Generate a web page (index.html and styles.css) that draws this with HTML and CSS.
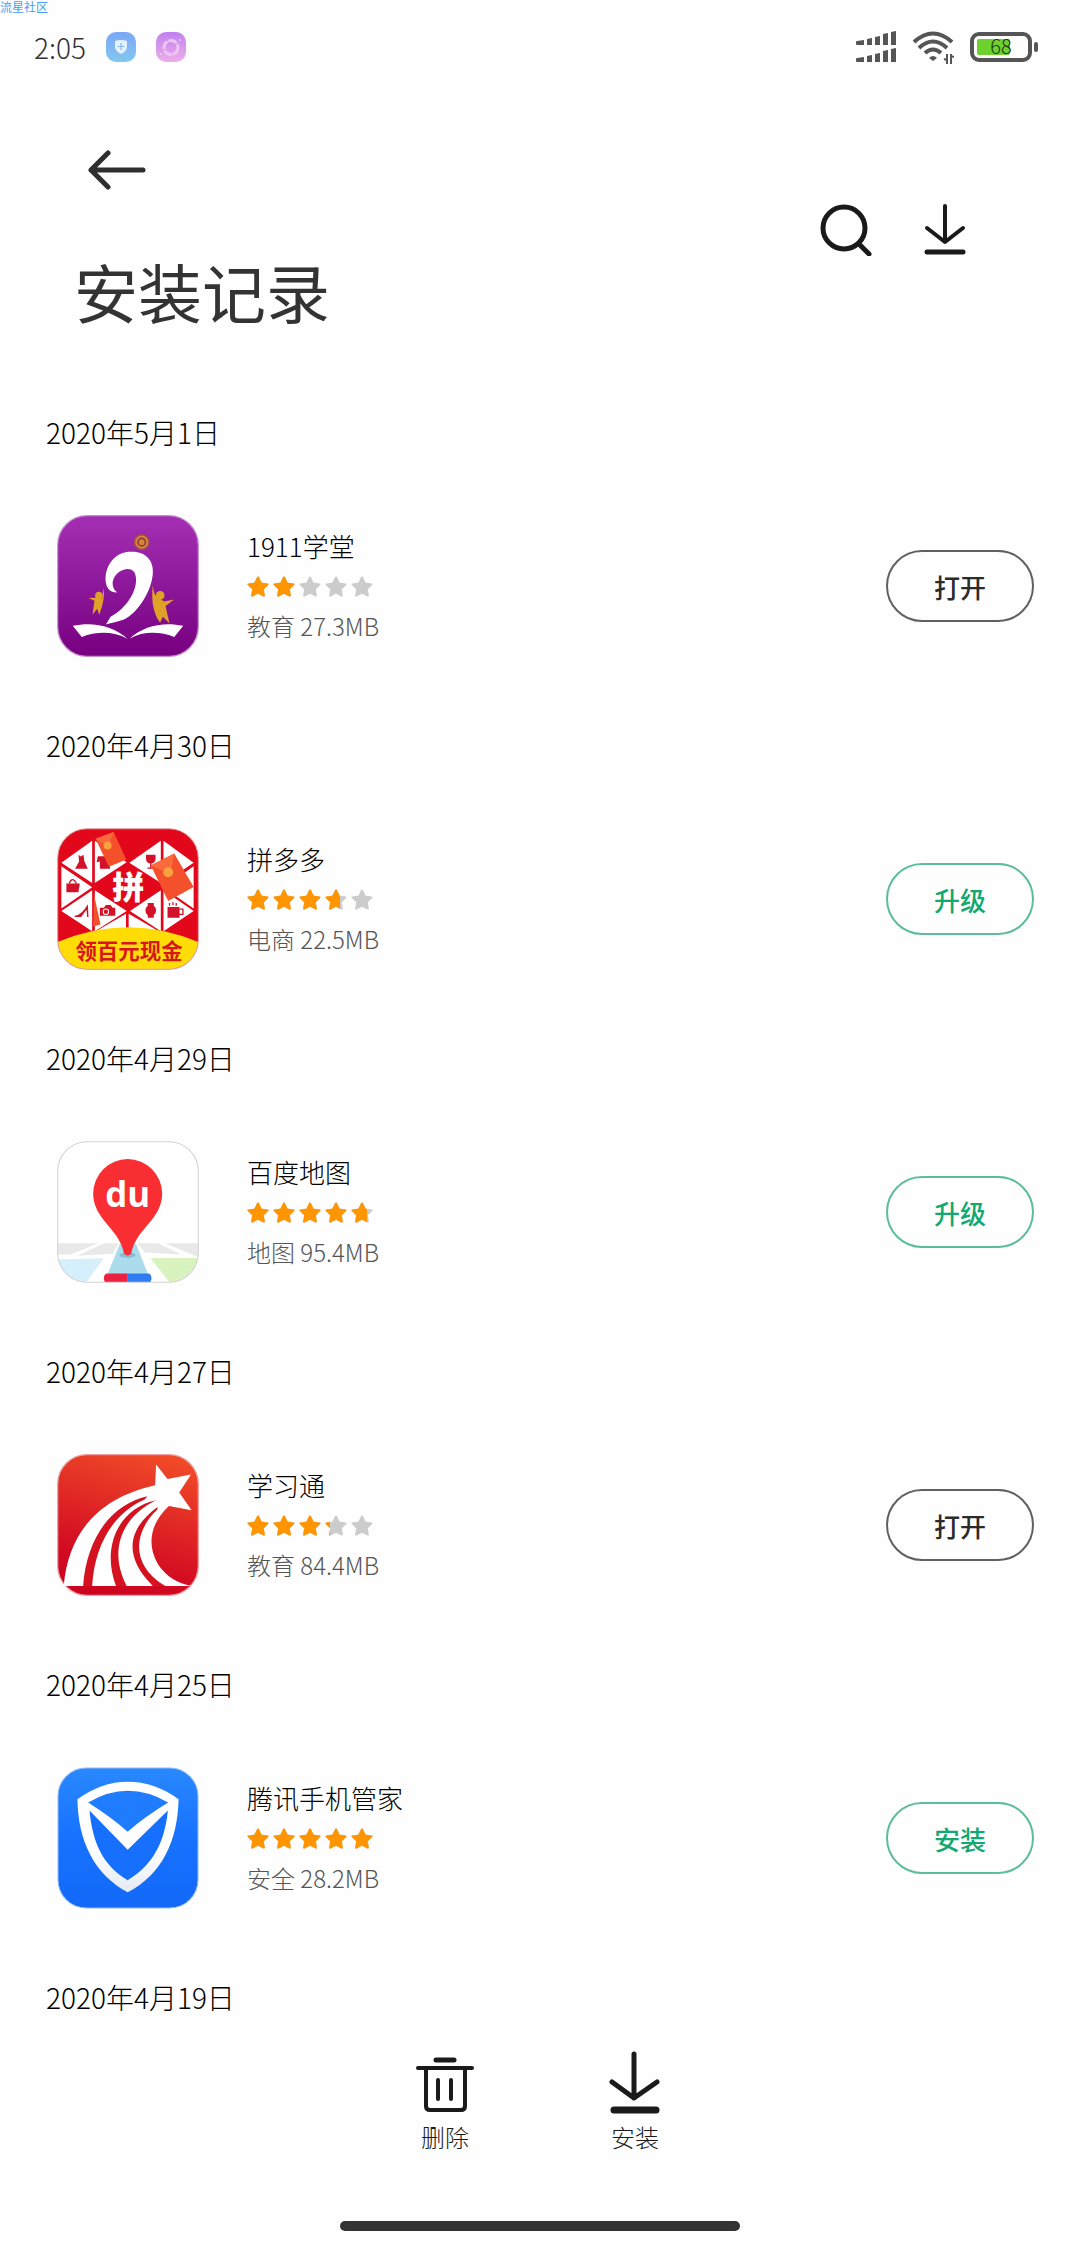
FILE: index.html
```html
<!DOCTYPE html>
<html lang="zh-CN">
<head>
  <meta charset="UTF-8">
  <meta name="viewport" content="width=device-width, initial-scale=1.0">
  <title>安装记录</title>
  <link rel="stylesheet" href="styles.css">
</head>
<body>
<!-- Shared symbols -->
<svg class="symbols" aria-hidden="true">
  <symbol id="star" viewBox="0 0 22 22">
    <path d="M11 1.5l2.9 6 6.6.9-4.8 4.6 1.2 6.6-5.9-3.1-5.9 3.1 1.2-6.6L1.5 8.4l6.6-.9z" fill="currentColor" stroke="currentColor" stroke-width="2" stroke-linejoin="round"/>
  </symbol>
  <symbol id="stars" viewBox="0 0 126 22">
    <use href="#star" x="0" width="22" height="22"/>
    <use href="#star" x="26" width="22" height="22"/>
    <use href="#star" x="52" width="22" height="22"/>
    <use href="#star" x="78" width="22" height="22"/>
    <use href="#star" x="104" width="22" height="22"/>
  </symbol>
</svg>

<div class="page">
  <span class="watermark">流星社区</span>

  <!-- Status bar -->
  <div class="status-bar">
    <span class="time">2:05</span>
    <svg class="status-app" viewBox="0 0 30 30">
      <defs><linearGradient id="sa1" x2="0" y2="1"><stop stop-color="#7ba6f7"/><stop offset="1" stop-color="#83c8f0"/></linearGradient></defs>
      <rect width="30" height="30" rx="10" fill="url(#sa1)"/>
      <path d="M9 9q6-2 12 0v6q0 4-6 7-6-3-6-7z" fill="#e6f1fd"/>
      <path d="M15 11v7M11.500 14.500h7" stroke="#84b6f4" stroke-width="1.200"/>
    </svg>
    <svg class="status-app" viewBox="0 0 30 30">
      <defs><linearGradient id="sa2" x2="0" y2="1"><stop stop-color="#c080f0"/><stop offset="1" stop-color="#eeaee8"/></linearGradient></defs>
      <rect width="30" height="30" rx="10" fill="url(#sa2)"/>
      <circle cx="15" cy="15.500" r="7" fill="none" stroke="#ecc6f6" stroke-width="3" stroke-dasharray="9 1"/>
      <circle cx="24" cy="8" r="1" fill="#ecc6f6"/><circle cx="5" cy="22" r="1" fill="#ecc6f6"/>
    </svg>
    <div class="status-right">
      <svg width="40" height="32" viewBox="0 0 40 32" fill="#555">
        <path d="M0 11q0-1 1-1l7-1v5H1q-1 0-1-1zM11 8l5-1v7h-5zM19 6l5-1v9h-5zM27 3l5-1v12h-5zM35 1l5-1v14h-5z"/>
        <path d="M0 28q0-1 1-1l7-1v5H1q-1 0-1-1zM11 25l5-1v7h-5zM19 23l5-1v9h-5zM27 20l5-1v12h-5zM35 18l5-1v14h-5z"/>
      </svg>
      <svg width="42" height="33" viewBox="0 0 42 33" fill="none" stroke="#555" stroke-width="4">
        <path d="M2 11Q21-6 40 11M7 17q14-13 28 0M13 22q8-7 16 0"/>
        <path d="M17 27q4-4 8 0l-4 3z" fill="#555" stroke="none"/>
        <path d="M35 23v10M32 28l3 1M39 23v10M39 25l3 1" stroke-width="2"/>
      </svg>
      <svg width="68" height="30" viewBox="0 0 68 30">
        <rect x="2" y="2" width="58" height="26" rx="7" fill="none" stroke="#555" stroke-width="4"/>
        <rect x="7" y="7" width="33" height="16" rx="2" fill="#6fd12f"/>
        <rect x="64" y="10" width="4" height="10" rx="2" fill="#555"/>
        <text class="battery-text" x="31" y="22" text-anchor="middle">68</text>
      </svg>
    </div>
  </div>

  <!-- Header -->
  <header class="header">
    <div class="header-left">
      <button class="icon-button back" aria-label="返回">
        <svg width="58" height="40" viewBox="0 0 58 40" fill="none" stroke="#2e2e2e" stroke-width="5" stroke-linecap="round" stroke-linejoin="round">
          <path d="M20 3L3 20l17 17M3 20h52"/>
        </svg>
      </button>
      <h1 class="title">安装记录</h1>
    </div>
    <div class="header-actions">
      <button class="icon-button" aria-label="搜索">
        <svg width="52" height="52" viewBox="0 0 52 52" fill="none" stroke="#1a1a1a" stroke-width="5" stroke-linecap="round">
          <circle cx="24" cy="24" r="21"/><path d="M39 40l10 10"/>
        </svg>
      </button>
      <button class="icon-button" aria-label="下载">
        <svg width="42" height="52" viewBox="0 0 42 52" fill="none" stroke="#1a1a1a" stroke-width="4" stroke-linecap="round" stroke-linejoin="round">
          <path d="M21 2v36M3 24l18 14 18-14"/><path d="M3 48h36" stroke-width="5"/>
        </svg>
      </button>
    </div>
  </header>

  <!-- Install records -->
  <main class="record-list">
    <section class="record">
      <h2 class="date">2020年5月1日</h2>
      <div class="app">
        <svg class="app-icon" viewBox="0 0 424 424">
          <defs><linearGradient id="g1" x2="0" y2="1"><stop stop-color="#a42fb4"/><stop offset="1" stop-color="#760080"/></linearGradient></defs>
          <rect x="2" y="2" width="420" height="420" rx="88" fill="url(#g1)" stroke="#c58fcc" stroke-width="4"/>
          <circle cx="253" cy="81" r="22" fill="#d8843a" stroke="#a04a50" stroke-width="5"/>
          <circle cx="253" cy="81" r="11" fill="none" stroke="#8f3a40" stroke-width="5"/>
          <path d="M180 231C156 234 143 212 145 186C149 140 180 110 220 110C268 108 290 140 286 176C282 226 244 290 200 312C180 320 164 320 146 327L160 304C210 276 238 226 236 190C235 170 226 160 208 161C184 164 166 184 166 206C167 218 172 226 180 231z" fill="#fff"/>
          <path d="M47 331C108 318 168 331 211 370C168 346 118 348 74 364zM377 331C318 318 258 331 217 369C258 346 308 348 350 364z" fill="#fff"/>
          <g fill="#e0a128">
            <circle cx="125" cy="240" r="11"/>
            <path d="M140 218q4 34-14 80l-6-18-14 18 6-42-18-8 30-2 10 4zM286 208q2 28 12 36l22 14 30-6-26 20 12 52-20-20-8 18q-30-40-22-114z"/>
            <circle cx="308" cy="240" r="13"/>
          </g>
        </svg>
        <div class="app-info">
          <h3 class="app-name">1911学堂</h3>
          <div class="rating" role="img" aria-label="2 星">
            <svg class="stars"><use href="#stars"/></svg>
            <div class="stars-on" style="width: 38%"><svg class="stars"><use href="#stars"/></svg></div>
          </div>
          <p class="app-meta">教育 27.3MB</p>
        </div>
        <button class="action">打开</button>
      </div>
    </section>

    <section class="record">
      <h2 class="date">2020年4月30日</h2>
      <div class="app">
        <svg class="app-icon" viewBox="0 0 424 424">
          <defs><clipPath id="round"><rect x="2" y="2" width="420" height="420" rx="88"/></clipPath></defs>
          <g clip-path="url(#round)">
            <rect width="424" height="424" fill="#e3071c"/>
            <path d="M105 38v126L13 104zM113 38v126l95-62zM13 114v126l92-63zM105 186v122L13 248zM113 186v122l95-60zM310 38v126l-94-60zM318 38v126l90-60zM408 114v126l-90-62zM310 186v122l-92-60zM318 186v122l90-60zM206 256v52h-90zM214 256v52h90z" fill="#fff"/>
            <!-- goods -->
            <g fill="#d3122a">
              <path d="M64 80l7 5 8-5 3 20 10 22H54l12-22zM122 84h36v38h-30v-22l-10 2z"/>
              <path d="M28 166h40l-4 26H28z"/><path d="M36 166q10-24 22 0" fill="none" stroke="#d3122a" stroke-width="4"/>
              <path d="M54 262q20-2 38-34l2 38h-4l-2-22-16 22H52zM128 238h12l6-8h14l6 8h8v24h-46z"/>
              <path d="M266 80h28q4 24-12 26v12h8v4h-20v-4h8v-12q-16-2-12-26z"/>
              <circle cx="280" cy="246" r="16"/><path d="M271 224h18v44h-18zM330 236h36v32h-36zM334 224h4v8h-4zM344 222h4v8h-4zM354 224h4v8h-4z"/>
              <path d="M366 242h10v16h-12" fill="none" stroke="#d3122a" stroke-width="4"/>
            </g>
            <circle cx="146" cy="250" r="8" fill="none" stroke="#fff" stroke-width="3"/>
            <text class="pdd-mark" x="213" y="213" text-anchor="middle">拼</text>
            <!-- red envelopes -->
            <path d="M115 32l54-20 38 82-52 22zM280 112l70-36 58 100-76 42zM110 196l20 92-22 6z" fill="#f4502c"/>
            <path d="M115 32l38 22 16-42zM280 112l58 26 12-62z" fill="#fa6a3c"/>
            <circle cx="151" cy="52" r="12" fill="#f7a23c"/><circle cx="332" cy="132" r="15" fill="#f7a23c"/>
            <path d="M0 341Q212 251 424 341V424H0z" fill="#ffdc05"/>
            <text class="pdd-banner" x="215" y="391" text-anchor="middle">领百元现金</text>
          </g>
          <rect x="2" y="2" width="420" height="420" rx="88" fill="none" stroke="#dfa0a0" stroke-width="3"/>
        </svg>
        <div class="app-info">
          <h3 class="app-name">拼多多</h3>
          <div class="rating" role="img" aria-label="3.7 星">
            <svg class="stars"><use href="#stars"/></svg>
            <div class="stars-on" style="width: 74%"><svg class="stars"><use href="#stars"/></svg></div>
          </div>
          <p class="app-meta">电商 22.5MB</p>
        </div>
        <button class="action green">升级</button>
      </div>
    </section>

    <section class="record">
      <h2 class="date">2020年4月29日</h2>
      <div class="app">
        <svg class="app-icon" viewBox="0 0 424 424">
          <g clip-path="url(#round)">
            <rect width="424" height="424" fill="#fff"/>
            <path d="M0 305h124l-84 34H0zM140 305h44l-18 32-106 6zM240 305h62l68 34-108-6zM322 305h102v42z" fill="#e9e9e9"/>
            <path d="M0 354l140-4-54 74H0z" fill="#d5f0fb"/>
            <path d="M188 307h48l46 117H140z" fill="#acdcec"/>
            <path d="M278 349h146v75h-86z" fill="#d9f3bf"/>
            <ellipse cx="211" cy="341" rx="24" ry="8" fill="#84bdd4"/>
            <path d="M108 157A103 103 0 0 1 314 157C314 235 235 262 222 336Q211 348 200 336C187 262 108 235 108 157z" fill="#f92e33"/>
            <text class="du" x="211" y="197" text-anchor="middle">du</text>
            <path d="M211 396h-60q-11 0-11 14t11 14h60z" fill="#ec2140"/>
            <path d="M211 396h60q11 0 11 14t-11 14h-60z" fill="#2f7cf0"/>
          </g>
          <rect x="2" y="2" width="420" height="420" rx="88" fill="none" stroke="#d2d2d2" stroke-width="3"/>
        </svg>
        <div class="app-info">
          <h3 class="app-name">百度地图</h3>
          <div class="rating" role="img" aria-label="4.7 星">
            <svg class="stars"><use href="#stars"/></svg>
            <div class="stars-on" style="width: 95%"><svg class="stars"><use href="#stars"/></svg></div>
          </div>
          <p class="app-meta">地图 95.4MB</p>
        </div>
        <button class="action green">升级</button>
      </div>
    </section>

    <section class="record">
      <h2 class="date">2020年4月27日</h2>
      <div class="app">
        <svg class="app-icon" viewBox="0 0 424 424">
          <defs><linearGradient id="g4" x1=".7" y1="0" x2=".4" y2="1"><stop stop-color="#f04a28"/><stop offset=".8" stop-color="#d20a22"/><stop offset="1" stop-color="#cc0420"/></linearGradient></defs>
          <rect x="2" y="2" width="420" height="420" rx="88" fill="url(#g4)" stroke="#eaa0a0" stroke-width="4"/>
          <path d="M296 31l34 44 70-14-35 54 37 53-68-13C280 205 266 270 302 330C326 366 360 386 402 394H20C34 240 118 132 293 93z" fill="#fff"/>
          <g fill="#d5121f">
            <path d="M270 126C160 150 88 254 78 394h27C112 270 170 175 262 136z"/>
            <path d="M296 138C190 160 130 270 176 394h32C154 290 190 190 296 138z"/>
            <path d="M300 158C216 220 192 300 286 394h37C216 330 230 230 300 166z"/>
          </g>
        </svg>
        <div class="app-info">
          <h3 class="app-name">学习通</h3>
          <div class="rating" role="img" aria-label="3.2 星">
            <svg class="stars"><use href="#stars"/></svg>
            <div class="stars-on" style="width: 66%"><svg class="stars"><use href="#stars"/></svg></div>
          </div>
          <p class="app-meta">教育 84.4MB</p>
        </div>
        <button class="action">打开</button>
      </div>
    </section>

    <section class="record">
      <h2 class="date">2020年4月25日</h2>
      <div class="app">
        <svg class="app-icon" viewBox="0 0 424 424">
          <defs>
            <linearGradient id="g5" x2="0" y2="1"><stop stop-color="#2a88ff"/><stop offset=".5" stop-color="#1672ff"/><stop offset="1" stop-color="#1469f8"/></linearGradient>
            <linearGradient id="g5w" x2="0" y2="1"><stop offset=".6" stop-color="#fff"/><stop offset="1" stop-color="#e6ebf2"/></linearGradient>
          </defs>
          <rect x="3" y="3" width="418" height="418" rx="84" fill="url(#g5)" stroke="#8fbcf8" stroke-width="3"/>
          <path d="M61 96C108 62 158 44 211 44S318 62 363 96C360 218 316 318 211 374C108 318 63 218 61 96z" fill="url(#g5w)"/>
          <path d="M93 106Q211 36 332 106Q260 150 211 193Q162 150 93 106z" fill="#1f7cff"/>
          <path d="M97 130L211 247L331 130C322 224 286 294 211 338C136 294 106 224 97 130z" fill="#1770fd"/>
        </svg>
        <div class="app-info">
          <h3 class="app-name">腾讯手机管家</h3>
          <div class="rating" role="img" aria-label="5 星">
            <svg class="stars"><use href="#stars"/></svg>
            <div class="stars-on" style="width: 100%"><svg class="stars"><use href="#stars"/></svg></div>
          </div>
          <p class="app-meta">安全 28.2MB</p>
        </div>
        <button class="action green">安装</button>
      </div>
    </section>

    <section class="record">
      <h2 class="date">2020年4月19日</h2>
    </section>
  </main>

  <!-- Footer -->
  <footer class="footer">
    <div class="toolbar">
      <button class="tool">
        <svg width="58" height="64" viewBox="0 0 58 64" fill="none" stroke="#1a1a1a" stroke-width="4" stroke-linecap="round">
          <path d="M20 9h18" stroke-width="5"/>
          <path d="M2 17h54"/>
          <path d="M10 17v38q0 4 4 4h31q4 0 4-4V17M22 29v19M35 29v19"/>
        </svg>
        删除
      </button>
      <button class="tool">
        <svg width="58" height="64" viewBox="0 0 58 64" fill="none" stroke="#1a1a1a" stroke-width="5" stroke-linecap="round" stroke-linejoin="round">
          <path d="M28 3v44M6 31l22 16 23-16"/><path d="M8 59h42" stroke-width="7"/>
        </svg>
        安装
      </button>
    </div>
    <div class="home-bar"></div>
  </footer>
</div>
</body>
</html>
```
FILE: styles.css
```css
* {
  box-sizing: border-box;
}

body, html {
  margin: 0;
  padding: 0;
  background: #fefefe;
  color: #000;
  font-family: "Noto Sans CJK SC", sans-serif;
  font-weight: 300;
}

h1, h2, h3, p {
  margin: 0;
  font-weight: 300;
}

button {
  padding: 0;
  border: none;
  background: none;
  font-family: inherit;
  cursor: pointer;
}

svg {
  display: block;
  flex-shrink: 0;
}

.symbols {
  position: absolute;
  width: 0;
  height: 0;
}

.page {
  position: relative;
  display: flex;
  flex-direction: column;
  height: 100vh;
  overflow: hidden;
}

.watermark {
  position: absolute;
  top: 0;
  left: 0;
  font-size: 12px;
  line-height: 14px;
  font-weight: 400;
  color: #4a9df0;
}

/* Status bar */
.status-bar {
  display: flex;
  align-items: center;
  gap: 20px;
  height: 94px;
  padding: 0 42px 0 34px;
}

.time {
  font-size: 28px;
  line-height: 32px;
  color: #333;
}

.status-app {
  width: 30px;
  height: 30px;
}

.status-right {
  display: flex;
  align-items: center;
  gap: 16px;
  margin-left: auto;
}

.battery-text {
  font-size: 20px;
  fill: #1d3a0c;
}

/* Header */
.header {
  display: flex;
  align-items: center;
  justify-content: space-between;
  padding: 40px 98px 6px 74px;
}

.header-left {
  display: flex;
  flex-direction: column;
  align-items: flex-start;
  gap: 48px;
}

.icon-button {
  display: flex;
  align-items: center;
  justify-content: center;
  height: 72px;
  padding: 0 8px;
}

.back {
  padding: 0 14px;
}

.title {
  font-size: 64px;
  line-height: 72px;
  font-weight: 400;
  color: #333;
}

.header-actions {
  display: flex;
  align-items: center;
  gap: 36px;
  padding-right: 8px;
}

/* Install records */
.record-list {
  flex: 1;
  min-height: 0;
  padding: 80px 46px 0;
  overflow-y: auto;
  scrollbar-width: none;
}

.record {
  padding-bottom: 68px;
}

.date {
  font-size: 28px;
  line-height: 40px;
}

.app {
  display: flex;
  align-items: center;
  margin-top: 63px;
  padding-left: 11px;
}

.app-icon {
  width: 142px;
  height: 142px;
}

.app-info {
  flex: 1;
  margin-left: 48px;
  padding-bottom: 4px;
}

.app-name {
  font-size: 26px;
  line-height: 40px;
}

.rating {
  position: relative;
  width: 126px;
  height: 22px;
  margin: 10px 0 12px;
  color: #ccc;
}

.stars {
  width: 126px;
  height: 22px;
}

.stars-on {
  position: absolute;
  top: 0;
  left: 0;
  overflow: hidden;
  color: #ff9500;
}

.app-meta {
  font-size: 24px;
  line-height: 32px;
  color: #555;
}

.action {
  width: 148px;
  height: 72px;
  border: 2px solid #606060;
  border-radius: 36px;
  font-size: 26px;
  font-weight: 500;
  color: #2b2b2b;
}

.action.green {
  border-color: #5cbd9a;
  color: #12a871;
}

/* Icon lettering */
.pdd-mark {
  font-size: 96px;
  font-weight: 900;
  fill: #fff;
}

.pdd-banner {
  font-size: 64px;
  font-weight: 700;
  fill: #d8141c;
}

.du {
  font-family: "Open Sans", sans-serif;
  font-size: 104px;
  font-weight: 700;
  fill: #fff;
}

/* Footer */
.footer {
  display: flex;
  flex-direction: column;
  align-items: center;
  padding: 40px 0 17px;
}

.toolbar {
  display: flex;
  gap: 80px;
}

.tool {
  display: flex;
  flex-direction: column;
  align-items: center;
  gap: 6px;
  width: 110px;
  font-size: 24px;
  line-height: 32px;
  font-weight: 300;
  color: #1a1a1a;
}

.home-bar {
  width: 37%;
  height: 10px;
  margin-top: 68px;
  border-radius: 5px;
  background: #333;
}
```
